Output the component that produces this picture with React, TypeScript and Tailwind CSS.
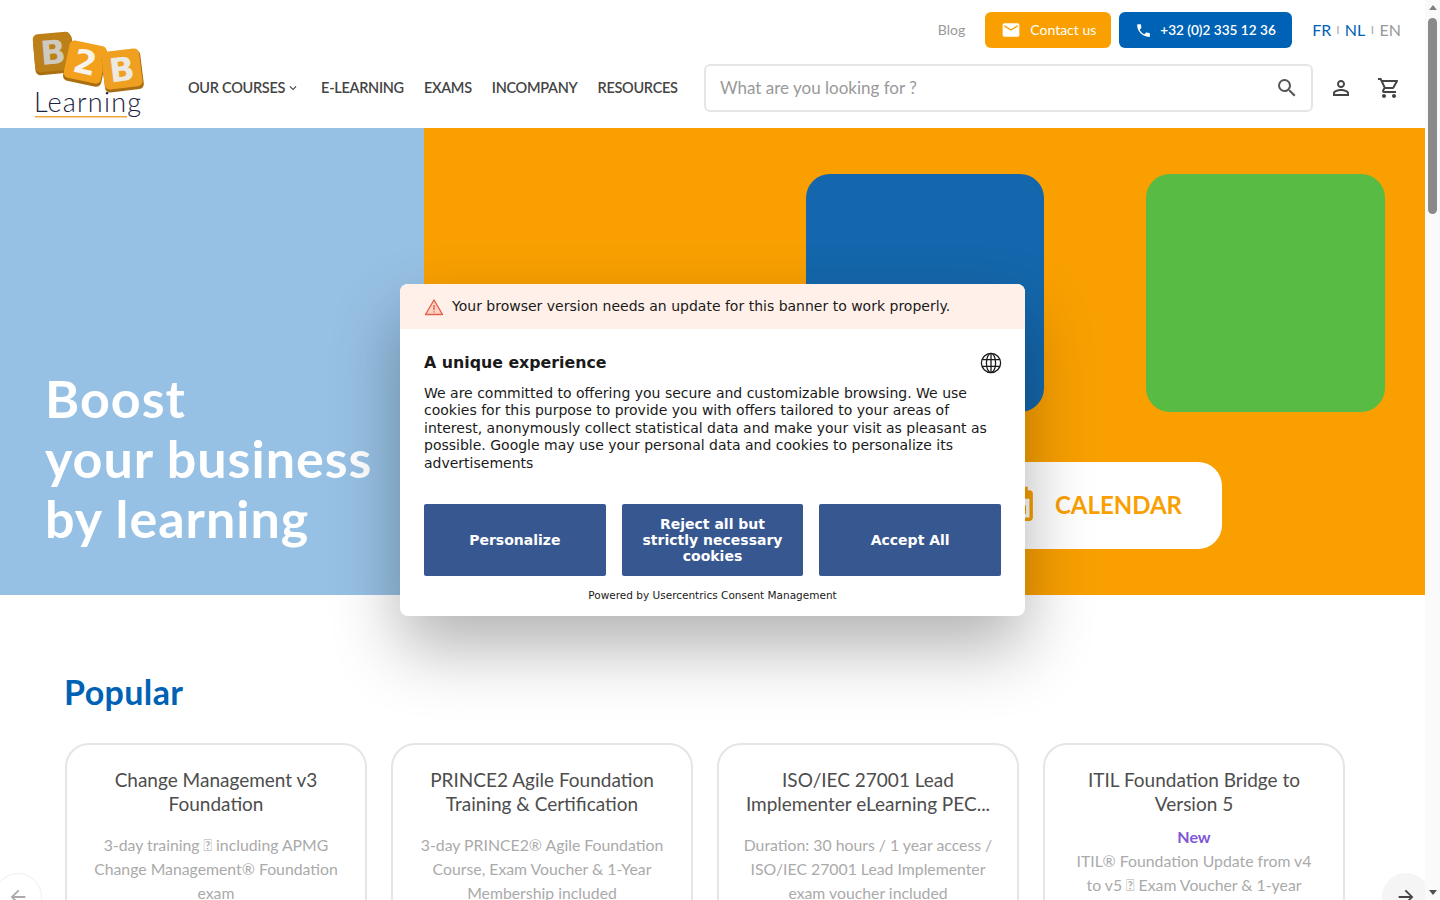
import {
  MdArrowBack,
  MdArrowForward,
  MdEmail,
  MdEvent,
  MdKeyboardArrowDown,
  MdOutlineShoppingCart,
  MdPermIdentity,
  MdPhone,
  MdSearch,
} from "react-icons/md";

const courses = [
  {
    title: ["Change Management v3", "Foundation"],
    desc: ["3-day training \uE000 including APMG", "Change Management® Foundation", "exam"],
  },
  {
    title: ["PRINCE2 Agile Foundation", "Training & Certification"],
    desc: ["3-day PRINCE2® Agile Foundation", "Course, Exam Voucher & 1-Year", "Membership included"],
  },
  {
    title: ["ISO/IEC 27001 Lead", "Implementer eLearning PEC..."],
    desc: ["Duration: 30 hours / 1 year access /", "ISO/IEC 27001 Lead Implementer", "exam voucher included"],
  },
  {
    title: ["ITIL Foundation Bridge to", "Version 5"],
    badge: "New",
    desc: ["ITIL® Foundation Update from v4", "to v5 \uE000 Exam Voucher & 1-year"],
  },
];

function Cube({ cx, cy, rot, letter, face, ink }: { cx: number; cy: number; rot: number; letter: string; face: string; ink: string }) {
  return (
    <g transform={`rotate(${rot} ${cx} ${cy})`}>
      <rect x={cx - 19} y={cy - 18} width="39" height="39" rx="5" fill="#a96f10" />
      <rect x={cx - 19} y={cy - 20} width="38" height="38" rx="5" fill={face} />
      <text
        x={cx}
        y={cy + 11}
        textAnchor="middle"
        fontFamily="'DejaVu Sans', sans-serif"
        fontWeight="700"
        fontSize="33"
        fill={ink}
      >
        {letter}
      </text>
    </g>
  );
}

function Logo() {
  return (
    <svg width="112" height="90" viewBox="0 0 112 90" className="shrink-0">
      <Cube cx={21} cy={23} rot={-5} letter="B" face="#bd7f17" ink="#cfcac0" />
      <Cube cx={53} cy={33} rot={12} letter="2" face="#f3a01c" ink="#f7f3ea" />
      <Cube cx={90} cy={40} rot={-7} letter="B" face="#f0a020" ink="#ece9e2" />
      <text x="2" y="82" fontFamily="Lato, sans-serif" fontWeight="300" fontSize="27" textLength="107" fill="#1c2340">
        Learning
      </text>
      <rect x="3" y="86" width="92" height="1.5" fill="#f2a63a" />
    </svg>
  );
}

function Header() {
  return (
    <header className="flex h-[128px] bg-white pl-[32px] pr-[24px] font-['Lato',sans-serif]">
      <div className="pt-[30px]">
        <Logo />
      </div>
      <div className="flex flex-1 flex-col">
        <div className="mt-[12px] flex h-[36px] items-center justify-end">
          <a className="pb-[2px] text-[14px] text-[#999999]">Blog</a>
          <a className="ml-[20px] flex h-[36px] w-[126px] items-center gap-[9px] rounded-md bg-[#f9a000] pl-[16px] text-[14px] text-white">
            <MdEmail size={20} />
            <span className="pb-[2px]">Contact us</span>
          </a>
          <a className="ml-[8px] flex h-[36px] w-[173px] items-center gap-[8px] rounded-md bg-[#0062b4] pl-[16px] text-[13.6px] font-semibold text-white">
            <MdPhone size={17} />
            <span>+32 (0)2 335 12 36</span>
          </a>
          <div className="ml-[20px] flex items-center pb-[1px] text-[16px] text-[#0062b4]">
            <span>FR</span>
            <span className="mx-[5px] text-[12px] text-[#aaaaaa]">I</span>
            <span>NL</span>
            <span className="mx-[5.5px] text-[12px] text-[#aaaaaa]">I</span>
            <span className="text-[#999999]">EN</span>
          </div>
        </div>
        <div className="mt-[16px] flex items-center">
          <nav className="ml-[44px] flex items-center pb-[1px] text-[14.5px] font-semibold tracking-[-0.3px] text-[#444444]">
            <a className="flex items-center">
              OUR COURSES
              <MdKeyboardArrowDown size={14} className="ml-[1px]" />
            </a>
            <a className="ml-[21px]">E-LEARNING</a>
            <a className="ml-[20px]">EXAMS</a>
            <a className="ml-[20px]">INCOMPANY</a>
            <a className="ml-[20px]">RESOURCES</a>
          </nav>
          <div className="ml-auto flex h-[48px] w-[609px] items-center justify-between rounded-md border-2 border-[#e5e5e5] pl-[14px] pr-[12px]">
            <span className="text-[17px] text-[#999999]">What are you looking for ?</span>
            <MdSearch size={24} className="text-[#555555]" />
          </div>
          <MdPermIdentity size={24} className="ml-[16px] text-[#444444]" />
          <MdOutlineShoppingCart size={24} className="ml-[24px] text-[#444444]" />
        </div>
      </div>
    </header>
  );
}

function Hero() {
  return (
    <section className="flex h-[467px]">
      <div className="flex w-[424px] items-end bg-[#97c1e4] pb-[47px] pl-[45px]">
        <h1 className="font-['Lato',sans-serif] text-[52px] leading-[60px] font-bold tracking-[1px] text-white">
          Boost
          <br />
          your business
          <br />
          by learning
        </h1>
      </div>
      <div className="flex flex-1 flex-col items-end bg-[#f9a000] pt-[46px] pr-[40px]">
        <div className="flex gap-[102px]">
          <div className="h-[238px] w-[238px] rounded-3xl bg-[#1467ac]" />
          <div className="h-[238px] w-[239px] rounded-3xl bg-[#58bb43]" />
        </div>
        <div className="mt-[50px] mr-[163px] flex h-[87px] items-center gap-[17px] rounded-3xl bg-white px-[40px]">
          <MdEvent size={41} className="text-[#f9a000]" />
          <span className="pb-[2px] font-['Lato',sans-serif] text-[24px] font-bold text-[#f9a000]">CALENDAR</span>
        </div>
      </div>
    </section>
  );
}

function Popular() {
  return (
    <section className="relative h-[3390px] px-[65px] pt-[75px]">
      <h2 className="ml-[-1px] font-['Lato',sans-serif] text-[34px] leading-[44px] font-bold tracking-[0.4px] text-[#0062b4]">
        Popular
      </h2>
      <div className="mt-[29px] flex gap-[24px]">
        {courses.map((course) => (
          <div
            key={course.title[0]}
            className="h-[300px] w-[302px] rounded-3xl border-2 border-[#e5e5e5] px-[10px] pt-[23px] text-center"
          >
            <h3 className="font-['Lato',sans-serif] text-[19px] leading-[24px] text-[#4d4d4d]">
              {course.title.map((line) => (
                <div key={line}>{line}</div>
              ))}
            </h3>
            {course.badge ? (
              <div className="mt-[9px] font-['Lato',sans-serif] text-[16px] leading-[24px] font-bold text-[#7e57d8]">
                {course.badge}
              </div>
            ) : (
              <div className="h-[17px]" />
            )}
            <div className="font-['Lato',sans-serif] text-[15.8px] leading-[24px] text-[#aaaaaa]">
              {course.desc.map((line) => (
                <div key={line}>{line}</div>
              ))}
            </div>
          </div>
        ))}
      </div>
      <button className="absolute top-[278px] left-[-6px] flex h-[48px] w-[48px] items-center justify-center rounded-full border border-[#f0f0f0] bg-white text-[#aaaaaa]">
        <MdArrowBack size={22} />
      </button>
      <button className="absolute top-[278px] right-[-5px] flex h-[48px] w-[48px] items-center justify-center rounded-full bg-[#f5f5f5] text-[#444444]">
        <MdArrowForward size={22} />
      </button>
    </section>
  );
}

function ConsentModal() {
  return (
    <div className="absolute inset-0 flex items-center justify-center font-['DejaVu_Sans',sans-serif]">
      <div className="w-[625px] overflow-hidden rounded-lg bg-white text-[#1a1a1a] shadow-[0_32px_68px_rgba(0,0,0,0.3)]">
        <div className="flex h-[45px] items-center gap-[8px] bg-[#fff1ea] pl-[24px] text-[14px]">
          <svg width="20" height="20" viewBox="0 0 20 20" fill="#fbd3c6" stroke="#e2614a" strokeWidth="1.4" className="shrink-0">
            <path d="M10 3 L18.5 17.5 H1.5 Z" strokeLinejoin="round" />
            <path d="M10 8 V13 M10 14.2 V15.4" />
          </svg>
          Your browser version needs an update for this banner to work properly.
        </div>
        <div className="px-[24px] pt-[23px]">
          <div className="flex items-center justify-between">
            <h2 className="text-[15.8px] leading-[22px] font-bold">A unique experience</h2>
            <svg width="22" height="22" viewBox="0 0 22 22" fill="none" stroke="#1a1a1a" strokeWidth="1.3" className="mr-[-1px]">
              <circle cx="11" cy="11" r="9.6" />
              <ellipse cx="11" cy="11" rx="4.6" ry="9.6" />
              <path d="M11 1.4 V20.6 M2.2 7.6 H19.8 M2.2 14.4 H19.8" />
            </svg>
          </div>
          <p className="mt-[10.5px] text-[14px] leading-[17.5px]">
            We are committed to offering you secure and customizable browsing. We use cookies for this purpose to
            provide you with offers tailored to your areas of interest, anonymously collect statistical data and make
            your visit as pleasant as possible. Google may use your personal data and cookies to personalize its
            advertisements
          </p>
          <div className="mt-[31.5px] grid grid-cols-3 gap-[16px]">
            <button className="h-[72px] rounded-[2px] bg-[#375790] text-[14px] leading-[16px] font-bold text-white">
              Personalize
            </button>
            <button className="h-[72px] rounded-[2px] bg-[#375790] px-[12px] text-[14px] leading-[16px] font-bold text-white">
              Reject all but strictly necessary cookies
            </button>
            <button className="h-[72px] rounded-[2px] bg-[#375790] text-[14px] leading-[16px] font-bold text-white">
              Accept All
            </button>
          </div>
          <div className="pt-[12px] pb-[14px] text-center text-[10.5px] leading-[14px]">
            Powered by Usercentrics Consent Management
          </div>
        </div>
      </div>
    </div>
  );
}

function Scrollbar() {
  return (
    <aside className="flex h-screen w-[15px] shrink-0 flex-col items-center bg-[#fafafa]">
      <div className="mt-[5px] h-0 w-0 border-x-[4px] border-b-[5px] border-x-transparent border-b-[#808080]" />
      <div className="mt-[8px] h-[196px] w-[9px] rounded-full bg-[#8a8a8a]" />
      <div className="mt-auto mb-[5px] h-0 w-0 border-x-[4px] border-t-[5px] border-x-transparent border-t-[#505050]" />
    </aside>
  );
}

export default function App() {
  return (
    <div className="flex h-screen overflow-hidden bg-white">
      <main className="relative h-screen flex-1 overflow-hidden">
        <Header />
        <Hero />
        <Popular />
        <ConsentModal />
      </main>
      <Scrollbar />
    </div>
  );
}
